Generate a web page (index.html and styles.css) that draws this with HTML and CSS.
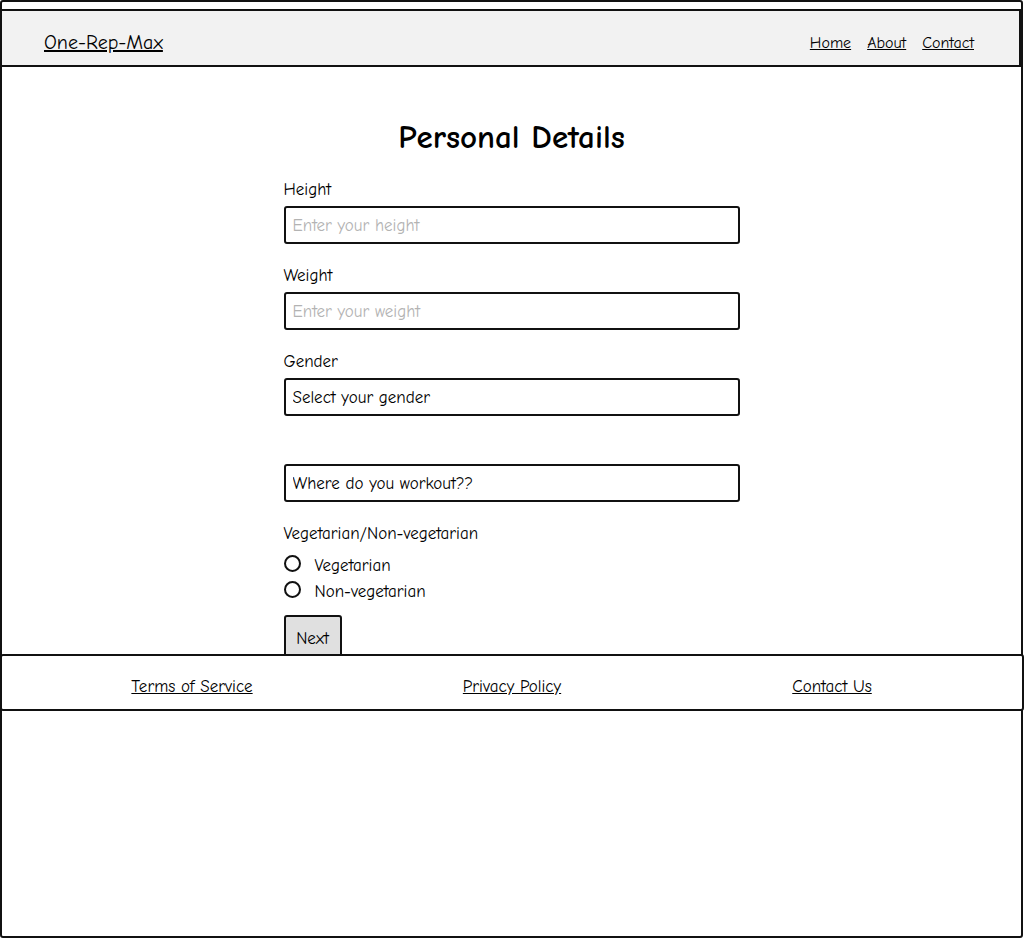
FILE: index.html
```html
<!DOCTYPE html>
<html lang="en">
<head>
    <meta charset="UTF-8">
    <meta name="viewport" content="width=device-width, initial-scale=1.0">
    <title>One-Rep-Max - Personal Details</title>
    <link rel="stylesheet" href="styles.css">
</head>
<body>

<div class="frame">
    <header class="topbar">
        <a href="#" class="logo">One-Rep-Max</a>
        <nav class="nav">
            <a href="#">Home</a>
            <a href="#">About</a>
            <a href="#">Contact</a>
        </nav>
    </header>

    <main class="content">
        <h1>Personal Details</h1>

        <form id="detailsForm" class="details-form">
            <div class="field">
                <label for="height">Height</label>
                <input type="text" id="height" name="height" placeholder="Enter your height">
            </div>

            <div class="field">
                <label for="weight">Weight</label>
                <input type="text" id="weight" name="weight" placeholder="Enter your weight">
            </div>

            <div class="field">
                <label for="gender">Gender</label>
                <select id="gender" name="gender">
                    <option>Select your gender</option>
                    <option>Male</option>
                    <option>Female</option>
                </select>
            </div>

            <div class="field">
                <label for="place"></label>
                <select id="place" name="place">
                    <option>Where do you workout??</option>
                    <option>Gym</option>
                    <option>Home</option>
                </select>
            </div>

            <div class="field">
                <span class="group-label">Vegetarian/Non-vegetarian</span>
                <label class="radio"><input type="radio" name="diet" value="veg"><span>Vegetarian</span></label>
                <label class="radio"><input type="radio" name="diet" value="nonveg"><span>Non-vegetarian</span></label>
            </div>

            <button type="submit" class="next-btn">Next</button>
        </form>
    </main>

    <footer class="footer">
        <a href="#">Terms of Service</a>
        <a href="#">Privacy Policy</a>
        <a href="#">Contact Us</a>
    </footer>
</div>

</body>
</html>
```

FILE: styles.css
```css
* {
    box-sizing: border-box;
}

body {
    margin: 0;
    font-family: "Comic Sans MS", "Comic Neue", "DejaVu Sans", sans-serif;
    color: #000;
    background-color: #fff;
}

a {
    color: #000;
}

.frame {
    width: 1023px;
    height: 938px;
    border: 2px solid #111;
    border-radius: 3px;
    padding-top: 7px;
}

.topbar {
    height: 58px;
    margin-left: -2px;
    border: 2px solid #111;
    background-color: #f2f2f2;
    display: flex;
    align-items: center;
    justify-content: space-between;
    padding: 9px 45px 0 42px;
}

.logo {
    font-size: 20px;
    line-height: 24px;
}

.nav {
    display: flex;
    gap: 16px;
    font-size: 16px;
    line-height: 20px;
}

.content {
    height: 587px;
    display: flex;
    flex-direction: column;
    align-items: center;
}

h1 {
    margin: 54px 0 27px;
    font-size: 33px;
    line-height: 32px;
}

.details-form {
    width: 456px;
}

.field {
    display: flex;
    flex-direction: column;
    margin-bottom: 22px;
}

.field label,
.group-label {
    display: block;
    height: 20px;
    line-height: 20px;
    font-size: 17px;
    margin-bottom: 6px;
}

.group-label {
    margin-bottom: 9px;
}

.field input[type="text"],
.field select {
    height: 38px;
    width: 100%;
    border: 2px solid #111;
    border-radius: 3px;
    padding: 0 7px;
    font-family: inherit;
    font-size: 17px;
    color: #000;
    background-color: #fff;
    appearance: none;
    -webkit-appearance: none;
}

.field input::placeholder {
    color: #b3b3b3;
}

.field .radio {
    display: flex;
    align-items: center;
    height: 26px;
    margin-bottom: 0;
}

.radio input {
    appearance: none;
    -webkit-appearance: none;
    width: 17px;
    height: 17px;
    margin: 0 14px 5px 0;
    border: 2px solid #111;
    border-radius: 50%;
}

.radio span {
    font-size: 17px;
}

.field:last-of-type {
    margin-bottom: 10px;
}

.next-btn {
    width: 58px;
    height: 42px;
    border: 2px solid #111;
    border-radius: 3px 3px 0 0;
    background-color: #e0e0e0;
    font-family: inherit;
    font-size: 17px;
    color: #000;
    padding: 4px 0 0;
}

.footer {
    position: relative;
    z-index: 1;
    height: 57px;
    margin: 0 -3px 0 -2px;
    padding-top: 8px;
    border: 2px solid #111;
    border-radius: 3px;
    background-color: #fff;
    display: grid;
    grid-template-columns: repeat(3, 320px);
    justify-content: center;
    justify-items: center;
    align-items: center;
    font-size: 17px;
}
```
